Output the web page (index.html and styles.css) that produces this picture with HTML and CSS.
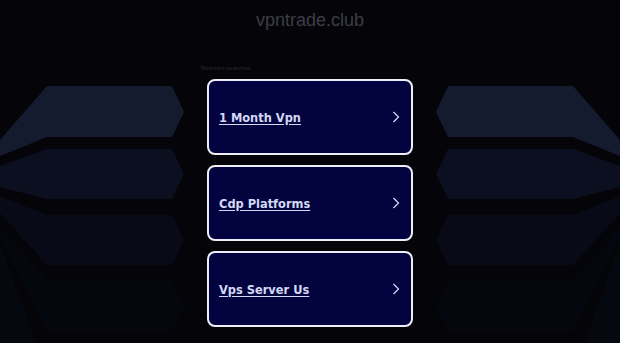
FILE: index.html
```html
<!DOCTYPE html>
<html lang="en">
<head>
<meta charset="utf-8">
<title>vpntrade.club</title>
<link rel="stylesheet" href="styles.css">
</head>
<body>
<svg class="backdrop" width="620" height="343" viewBox="0 0 620 343" aria-hidden="true">
  <g class="fan">
    <polygon class="s5" points="0,243 0,343 36,343"/>
    <polygon class="s1" points="0,140 47,86 172,86 184,112 172,137 47,137 0,156"/>
    <polygon class="s2" points="0,166 47,149 172,149 184,174 172,199 47,199 0,187"/>
    <polygon class="s3" points="0,196 47,215 172,215 184,240 172,265 47,265 0,213"/>
    <polygon class="s4" points="0,227 47,280 172,280 184,305 172,331 47,331 0,236"/>
  </g>
  <g class="fan" transform="translate(620,0) scale(-1,1)">
    <polygon class="s5" points="0,243 0,343 36,343"/>
    <polygon class="s1" points="0,140 47,86 172,86 184,112 172,137 47,137 0,156"/>
    <polygon class="s2" points="0,166 47,149 172,149 184,174 172,199 47,199 0,187"/>
    <polygon class="s3" points="0,196 47,215 172,215 184,240 172,265 47,265 0,213"/>
    <polygon class="s4" points="0,227 47,280 172,280 184,305 172,331 47,331 0,236"/>
  </g>
</svg>
<div class="page">
  <header class="header">vpntrade.club</header>
  <section class="related">
    <div class="label">Relevant searches</div>
    <ul class="cards">
      <li class="card"><a href="#">1 Month Vpn</a><svg class="chev" width="8" height="12" viewBox="0 0 8 12"><path d="M1.5 1 L6.5 6 L1.5 11"/></svg></li>
      <li class="card"><a href="#">Cdp Platforms</a><svg class="chev" width="8" height="12" viewBox="0 0 8 12"><path d="M1.5 1 L6.5 6 L1.5 11"/></svg></li>
      <li class="card"><a href="#">Vps Server Us</a><svg class="chev" width="8" height="12" viewBox="0 0 8 12"><path d="M1.5 1 L6.5 6 L1.5 11"/></svg></li>
    </ul>
  </section>
</div>
</body>
</html>
```
FILE: styles.css
```css
html, body {
  margin: 0;
  padding: 0;
  background: #050509;
  height: 100%;
  overflow: hidden;
}
body {
  position: relative;
  font-family: "Liberation Sans", Arial, sans-serif;
}
.backdrop {
  position: absolute;
  left: 0;
  top: 0;
  z-index: 0;
}
.s1 { fill: #151b2f; }
.s2 { fill: #0c0f1f; }
.s3 { fill: #080b17; }
.s4 { fill: #05070f; }
.s5 { fill: #06080f; }
.page {
  position: relative;
  z-index: 1;
  display: flex;
  flex-direction: column;
  align-items: center;
}
.header {
  height: 40px;
  line-height: 40px;
  font-size: 18px;
  color: #3d3d48;
  text-align: center;
}
.related {
  margin-top: 24px;
  width: 218px;
}
.label {
  font-size: 6px;
  line-height: 8px;
  height: 8px;
  color: #26262e;
}
.cards {
  list-style: none;
  margin: 7px 0 0 0;
  padding: 0 6px;
  display: flex;
  flex-direction: column;
  gap: 10px;
}
.card {
  box-sizing: border-box;
  height: 76px;
  border: 2px solid #eeeefa;
  border-radius: 8px;
  background: #03033f;
  display: flex;
  align-items: center;
  justify-content: space-between;
  padding: 0 11px 0 10px;
}
.card a {
  font-family: "DejaVu Sans Condensed", "DejaVu Sans", sans-serif;
  font-stretch: condensed;
  font-weight: bold;
  font-size: 12.7px;
  color: #d4d8f4;
  text-decoration: underline;
  text-underline-offset: 2px;
}
.chev path {
  fill: none;
  stroke: #d4d8f4;
  stroke-width: 1.3;
}
```
